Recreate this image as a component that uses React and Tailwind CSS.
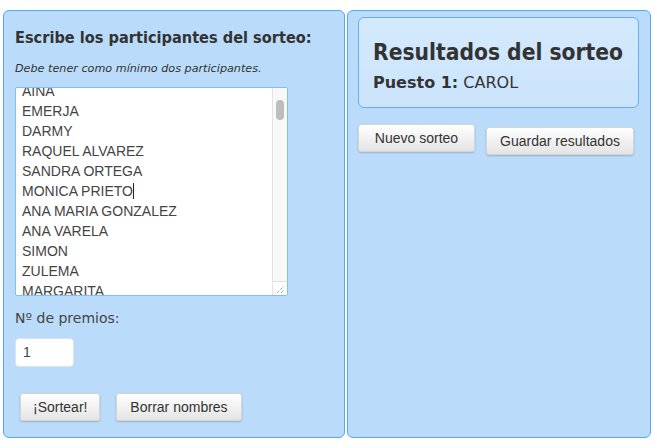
import { useState } from "react";

const names = [
  "CAROL",
  "AINA",
  "EMERJA",
  "DARMY",
  "RAQUEL ALVAREZ",
  "SANDRA ORTEGA",
  "MONICA PRIETO",
  "ANA MARIA GONZALEZ",
  "ANA VARELA",
  "SIMON",
  "ZULEMA",
  "MARGARITA",
];

const Btn = ({ children, className = "" }) => (
  <button
    className={
      "h-[28px] px-[12px] rounded-[3px] border border-[#d4d4d4] bg-gradient-to-b from-white to-[#e4e4e4] shadow-[0_1px_2px_rgba(0,0,0,0.2)] text-[14px] text-[#333] font-['Liberation_Sans',Arial,sans-serif] " +
      className
    }
  >
    {children}
  </button>
);

const App = () => {
  const [premios] = useState("1");

  return (
    <div className="w-[657px] h-[448px] bg-white flex gap-[2px] pl-[3px] pt-[10px] font-['DejaVu_Sans',sans-serif] text-[#333]">
      <div className="w-[342px] h-[428px] rounded-[6px] border border-[#55a8f5] bg-[#badcfa] px-[11px] flex flex-col">
        <h1 className="mt-[16px] text-[16.2px] font-bold leading-[22px] whitespace-nowrap font-['DejaVu_Sans_Condensed','DejaVu_Sans',sans-serif]">Escribe los participantes del sorteo:</h1>
        <p className="mt-[13px] text-[11.2px] italic leading-[14px]">Debe tener como mínimo dos participantes.</p>
        <div className="mt-[11px] w-[273px] h-[209px] bg-white border border-[#7cc0f6] rounded-[2px] flex overflow-hidden">
          <div className="flex-1 overflow-hidden font-['Liberation_Sans',Arial,sans-serif] text-[14px] leading-[20px] text-[#444] pl-[6px]">
            <div className="-mt-[27px]">
              {names.map((n) => (
                <div key={n}>
                  {n}
                  {n === "MONICA PRIETO" && <span className="inline-block w-px h-[16px] bg-[#222] align-[-3px]" />}
                </div>
              ))}
            </div>
          </div>
          <div className="w-[15px] border-l border-[#e4e4e4] bg-[#f8f8f8] flex flex-col">
            <div className="flex-1 pt-[12px] flex justify-center">
              <div className="w-[8px] h-[20px] rounded-full bg-[#bdbdbd]" />
            </div>
            <div className="h-[14px] border-t border-[#e0e0e0] bg-white relative">
              <svg width="14" height="13" className="absolute right-0 bottom-0">
                <path d="M4 11 L11 4 M8 11 L11 8" stroke="#777" strokeWidth="1" strokeDasharray="1 1" fill="none" />
              </svg>
            </div>
          </div>
        </div>
        <label className="mt-[12px] text-[14px] leading-[20px] text-[#444]">Nº de premios:</label>
        <div className="mt-[10px] w-[59px] h-[29px] bg-white border border-[#d6e4f0] rounded-[4px] flex items-center pl-[7px] font-['Liberation_Sans',Arial,sans-serif] text-[14px] text-[#444]">
          {premios}
        </div>
        <div className="mt-[26px] flex gap-[16px] pl-[5px]">
          <Btn className="w-[80px]">¡Sortear!</Btn>
          <Btn className="w-[126px]">Borrar nombres</Btn>
        </div>
      </div>
      <div className="w-[304px] h-[428px] rounded-[6px] border border-[#55a8f5] bg-[#badcfa] px-[10px] flex flex-col">
        <div className="mt-[6px] w-[281px] h-[91px] rounded-[6px] border border-[#66aef0] bg-gradient-to-b from-[#d4e9fd] to-[#cbe4fc] px-[14px] pt-[19px]">
          <h2 className="text-[22.6px] font-bold leading-[30px] text-[#333] whitespace-nowrap font-['DejaVu_Sans_Condensed','DejaVu_Sans',sans-serif]">Resultados del sorteo</h2>
          <p className="mt-[5px] text-[16px] leading-[22px]">
            <span className="font-bold">Puesto 1:</span> CAROL
          </p>
        </div>
        <div className="mt-[16px] flex gap-[11px] items-start">
          <Btn className="w-[117px] text-[14.8px]">Nuevo sorteo</Btn>
          <Btn className="w-[148px] mt-[3px]">Guardar resultados</Btn>
        </div>
      </div>
    </div>
  );
};

export default App;
